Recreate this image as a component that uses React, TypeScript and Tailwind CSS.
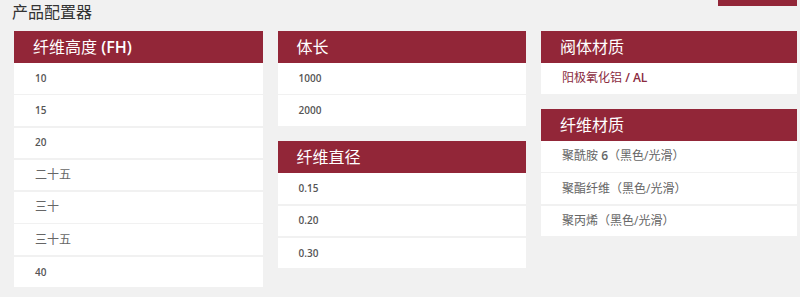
import React from 'react';

// ── Types ────────────────────────────────────────────────────────

interface OptionGroup {
  title: React.ReactNode;
  key: string;
  options: React.ReactNode[];
  selected?: number;
}

// ── Data ─────────────────────────────────────────────────────────

const B = ({ children }: { children: React.ReactNode }) => (
  <span className="font-semibold">{children}</span>
);

const columns: OptionGroup[][] = [
  [
    {
      key: 'fh',
      title: <>纤维高度{' '}<B>(FH)</B></>,
      options: [<B>10</B>, <B>15</B>, <B>20</B>, '二十五', '三十', '三十五', <B>40</B>],
    },
  ],
  [
    { key: 'len', title: '体长', options: [<B>1000</B>, <B>2000</B>] },
    { key: 'dia', title: '纤维直径', options: [<B>0.15</B>, <B>0.20</B>, <B>0.30</B>] },
  ],
  [
    {
      key: 'body',
      title: '阀体材质',
      options: [<>阳极氧化铝{' '}<B>/ AL</B></>],
      selected: 0,
    },
    {
      key: 'fiber',
      title: '纤维材质',
      options: [
        <>聚酰胺{' '}<B>6</B>（黑色/光滑）</>,
        '聚酯纤维（黑色/光滑）',
        '聚丙烯（黑色/光滑）',
      ],
    },
  ],
];

const font = "font-['Open_Sans','Noto_Sans_CJK_SC',sans-serif]";

// ── Components ───────────────────────────────────────────────────

function OptionCard({ group }: { group: OptionGroup }) {
  return (
    <div className="flex flex-col">
      <div className="flex h-[32px] items-center whitespace-pre bg-[#922638] pl-[19px] text-[16px] text-white">
        {group.title}
      </div>
      <div className="flex flex-col gap-[1.8px]">
        {group.options.map((opt, i) => {
          const isNum = typeof opt !== 'string' && i !== group.selected && group.key !== 'fiber';
          return (
            <div
              key={i}
              className={`flex h-[30.5px] items-center whitespace-pre bg-white pl-[21px] ${
                group.selected === i
                  ? 'text-[12px] text-[#8a2b3e]'
                  : isNum
                    ? 'text-[10px] text-[#555]'
                    : 'text-[12px] text-[#666]'
              }`}
            >
              {opt}
            </div>
          );
        })}
      </div>
    </div>
  );
}

export default function App() {
  return (
    <div className={`h-[297px] w-[800px] overflow-hidden bg-[#f1f1f1] ${font}`}>
      <div className="flex h-[31px] items-start justify-between">
        <h1 className="pl-[12px] pt-[2px] text-[16px] leading-[20px] text-[#333]">产品配置器</h1>
        <div className="mr-[3px] h-[6px] w-[79px] bg-[#922638]" />
      </div>

      <div className="flex gap-[15px] pl-[14px]">
        {columns.map((groups, ci) => (
          <div
            key={ci}
            className={`flex flex-col gap-[15.5px] ${ci === 2 ? 'w-[256px]' : 'w-[248.5px]'}`}
          >
            {groups.map((g) => (
              <OptionCard key={g.key} group={g} />
            ))}
          </div>
        ))}
      </div>
    </div>
  );
}
